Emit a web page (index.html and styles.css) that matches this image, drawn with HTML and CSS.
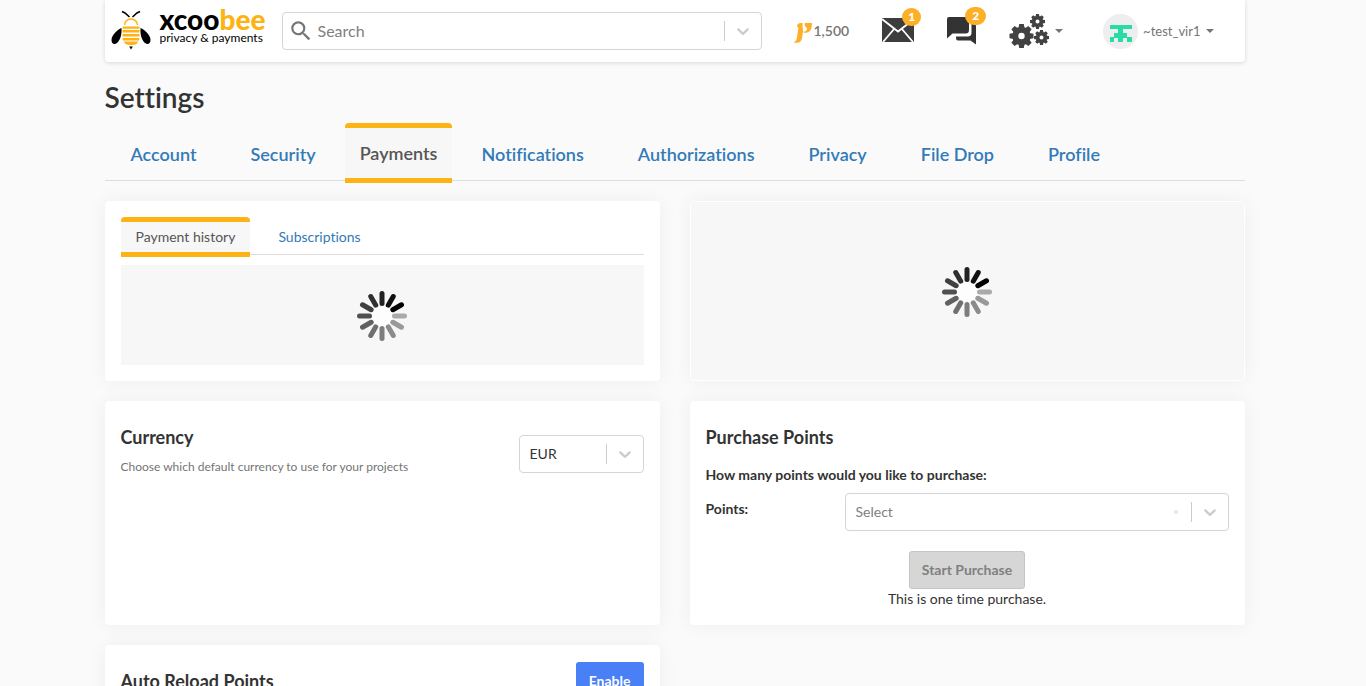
FILE: index.html
```html
<!DOCTYPE html>
<html lang="en">
<head>
<meta charset="utf-8">
<meta name="viewport" content="width=device-width, initial-scale=1">
<title>XcooBee - Settings</title>
<link rel="stylesheet" href="styles.css">
</head>
<body>
<svg class="defs" aria-hidden="true">
  <symbol id="chevron" viewBox="0 0 20 20">
    <path d="M4.516 7.548c0.436-0.446 1.043-0.481 1.576 0l3.908 3.747 3.908-3.747c0.533-0.481 1.141-0.446 1.574 0 0.436 0.445 0.408 1.197 0 1.615-0.406 0.418-4.695 4.502-4.695 4.502-0.217 0.223-0.502 0.335-0.787 0.335s-0.57-0.112-0.789-0.335c0 0-4.287-4.084-4.695-4.502s-0.436-1.17 0-1.615z"/>
  </symbol>
  <symbol id="spinner" viewBox="-25 -25 50 50">
    <circle r="12" fill="#fdfdfd"/>
    <g stroke-width="5" stroke-linecap="round">
      <path d="M12.500 0H22.500" stroke="#aaa"/>
      <path d="M12.500 0H22.500" stroke="#999" transform="rotate(30)"/>
      <path d="M12.500 0H22.500" stroke="#8b8b8b" transform="rotate(60)"/>
      <path d="M12.500 0H22.500" stroke="#7d7d7d" transform="rotate(90)"/>
      <path d="M12.500 0H22.500" stroke="#6f6f6f" transform="rotate(120)"/>
      <path d="M12.500 0H22.500" stroke="#606060" transform="rotate(150)"/>
      <path d="M12.500 0H22.500" stroke="#505050" transform="rotate(180)"/>
      <path d="M12.500 0H22.500" stroke="#404040" transform="rotate(210)"/>
      <path d="M12.500 0H22.500" stroke="#303030" transform="rotate(240)"/>
      <path d="M12.500 0H22.500" stroke="#222" transform="rotate(270)"/>
      <path d="M12.500 0H22.500" stroke="#111" transform="rotate(300)"/>
      <path d="M12.500 0H22.500" stroke="#000" transform="rotate(330)"/>
    </g>
  </symbol>
  <symbol id="gear" viewBox="-12 -12 24 24">
    <circle r="6.200" fill="none" stroke="#424242" stroke-width="6"/>
    <g fill="#424242">
      <path id="tooth" d="M-3 -8L-2.300 -12H2.300L3 -8z"/>
      <use href="#tooth" transform="rotate(45)"/>
      <use href="#tooth" transform="rotate(90)"/>
      <use href="#tooth" transform="rotate(135)"/>
      <use href="#tooth" transform="rotate(180)"/>
      <use href="#tooth" transform="rotate(225)"/>
      <use href="#tooth" transform="rotate(270)"/>
      <use href="#tooth" transform="rotate(315)"/>
    </g>
  </symbol>
</svg>

<header class="topbar">
  <a class="logo" href="#">
    <svg class="logo-bee" viewBox="0 0 40 40" aria-hidden="true">
      <path d="M11 1.500l3 1.500 4.500 4M29 1.500l-3 1.500-4.500 4" fill="none" stroke="#000" stroke-width="1.600"/>
      <path d="M13.500 15a6.500 6 0 0 1 13 0" fill="none" stroke="#fdb314" stroke-width="1.600"/>
      <path d="M10.500 18C6.500 19.500 .5 25 .5 30c0 4 3 5 5.500 3 3-2.500 5-8 4.500-15zM29.500 18c4 1.500 10 7 10 12 0 4-3 5-5.500 3-3-2.500-5-8-4.500-15z"/>
      <path d="M11.500 16.500h17v2.300h-17zM11.500 20h17v2.600h-17zM11.500 24h17v2.600h-17zM11.500 28h17l-.4 2.400H11.900zM12.700 31.600h14.600l-1.800 2.300c-3 1.400-8 1.400-11 0z" fill="#fdb314"/>
      <path d="M18.200 36.500h3.600L20 39.500z"/>
    </svg>
    <span class="logo-text">
      <span class="logo-name">xcoo<span class="logo-accent">bee</span></span>
      <span class="logo-tag">privacy &amp; payments</span>
    </span>
  </a>

  <div class="search control">
    <svg class="search-icon" viewBox="0 0 24 24" aria-hidden="true"><path fill="#757575" d="M15.500 14h-.79l-.28-.27A6.471 6.471 0 0 0 16 9.500 6.500 6.500 0 1 0 9.500 16c1.610 0 3.090-.59 4.230-1.570l.27.28v.79l5 4.990L20.490 19l-4.990-5zm-6 0C7.010 14 5 11.990 5 9.500S7.010 5 9.500 5 14 7.010 14 9.500 11.990 14 9.500 14z"/></svg>
    <input class="search-input" type="search" placeholder="Search" aria-label="Search">
    <span class="indicator"><svg class="chevron"><use href="#chevron"/></svg></span>
  </div>

  <a class="points" href="#">
    <svg class="points-icon" viewBox="0 0 60 66" aria-hidden="true">
      <path fill="#fdb027" d="M29 3H24C16 3 12 8 12 14C15 14 16 16 16 19L12 46C11 54 8 58 2 62H12C21 62 26 56 27 47L30 28C31 20 27 16 29 3Z"/>
      <path fill="#fdb027" d="M36 3H57L56 14C55 25 47 32 38 32C34 32 31 31 30 29C38 29 42 26 42 20C42 15 35 14 35 8C35 5 35 4 36 3Z"/>
    </svg>
    <span>1,500</span>
  </a>

  <a class="notice notice-mail" href="#" aria-label="Messages">
    <svg class="mail-icon" viewBox="0 0 32 24" aria-hidden="true">
      <path fill="#3d3d3d" d="M0 0h32v24H0z"/>
      <path fill="none" stroke="#fff" stroke-width="1.800" d="M0 1l16 12.500L32 1M1 24l11.500-13.500M31 24L19.500 10.500"/>
    </svg>
    <span class="badge">1</span>
  </a>
  <a class="notice notice-chat" href="#" aria-label="Conversations">
    <svg class="chat-icon" viewBox="0 0 30 28" aria-hidden="true">
      <path fill="#333" d="M2 0h18a2 2 0 0 1 2 2v11c0 2.500-1 3.500-3.500 3.500H5.500L0 21.500V2a2 2 0 0 1 2-2z"/>
      <path fill="#333" d="M24.500 7H27a2 2 0 0 1 2 2v18.500L23.500 23.500H11c-1.500 0-2-1-2-4h11c3.500 0 4.500-1 4.500-4.500z"/>
    </svg>
    <span class="badge">2</span>
  </a>

  <button class="menu menu-tools" type="button" aria-label="Tools">
    <svg class="gears-icon" viewBox="0 0 42 34" aria-hidden="true">
      <use href="#gear" x="0" y="10" width="25" height="24"/>
      <use href="#gear" x="21" y="0" width="15" height="15"/>
      <use href="#gear" x="25" y="16" width="15" height="15"/>
    </svg>
    <span class="caret"></span>
  </button>

  <button class="menu menu-user" type="button">
    <svg class="avatar" viewBox="0 0 35 35" aria-hidden="true">
      <circle cx="17.500" cy="17.500" r="17.500" fill="#eee"/>
      <path fill="#27dda5" d="M7 11h22v4h-9v4h4v4h5v5h-5v-4h-4v4h-5v-4h-4v4H7v-5h4v-4h4v-4H7z"/>
    </svg>
    <span>~test_vir1</span>
    <span class="caret"></span>
  </button>
</header>

<main class="page">
  <h1 class="page-title">Settings</h1>
  <nav class="tabs" aria-label="Settings">
    <a class="tab" href="#">Account</a>
    <a class="tab" href="#">Security</a>
    <a class="tab tab-active" href="#" aria-current="page">Payments</a>
    <a class="tab" href="#">Notifications</a>
    <a class="tab" href="#">Authorizations</a>
    <a class="tab" href="#">Privacy</a>
    <a class="tab" href="#">File Drop</a>
    <a class="tab" href="#">Profile</a>
  </nav>

  <div class="cards">
    <section class="card">
      <nav class="subtabs" aria-label="Payments">
        <a class="subtab subtab-active" href="#" aria-current="page">Payment history</a>
        <a class="subtab" href="#">Subscriptions</a>
      </nav>
      <div class="loading"><svg class="spinner" role="img" aria-label="Loading"><use href="#spinner"/></svg></div>
    </section>

    <section class="card card-loading">
      <svg class="spinner" role="img" aria-label="Loading"><use href="#spinner"/></svg>
    </section>

    <section class="card card-currency">
      <div class="currency-text">
        <h2 class="card-title">Currency</h2>
        <p class="hint">Choose which default currency to use for your projects</p>
      </div>
      <div class="control currency-control">
        <select class="select" aria-label="Currency"><option>EUR</option></select>
        <span class="indicator"><svg class="chevron"><use href="#chevron"/></svg></span>
      </div>
    </section>

    <section class="card card-purchase">
      <h2 class="card-title">Purchase Points</h2>
      <p class="question">How many points would you like to purchase:</p>
      <div class="field">
        <label class="field-label" for="points">Points:</label>
        <div class="control">
          <select class="select select-empty" id="points"><option>Select</option></select>
          <span class="indicator"><span class="dot"></span><svg class="chevron"><use href="#chevron"/></svg></span>
        </div>
      </div>
      <div class="purchase-action">
        <button class="button button-disabled" type="button" disabled>Start Purchase</button>
        <p class="note">This is one time purchase.</p>
      </div>
    </section>

    <section class="card card-reload">
      <h2 class="card-title">Auto Reload Points</h2>
      <button class="button button-primary" type="button">Enable</button>
    </section>
  </div>
</main>
</body>
</html>
```

FILE: styles.css
```css
* { box-sizing: border-box; }

html { scrollbar-width: none; }

body {
  margin: 0;
  padding-right: 17px;
  background: #fafafa;
  color: #333;
  font: 14px/20px Lato, "Open Sans", sans-serif;
  font-variant-ligatures: none;
}

h1, h2, p { margin: 0; }
a { color: #337ab7; text-decoration: none; }
button, input, select { font: inherit; color: inherit; }
.defs { display: block; width: 0; height: 0; }

/* Top bar */
.topbar {
  display: flex;
  align-items: center;
  max-width: 1140px;
  height: 62px;
  margin: 0 auto;
  padding: 0 31px 0 6px;
  background: #fff;
  border-radius: 0 0 4px 4px;
  box-shadow: 0 1px 4px rgba(0, 0, 0, .14);
}

.logo { display: flex; align-items: center; gap: 9px; width: 171px; padding-bottom: 2px; color: #000; }
.logo-bee { width: 40px; height: 40px; }
.logo-text { display: grid; padding-bottom: 8px; }
.logo-name { font-size: 28px; line-height: 24px; font-weight: 900; }
.logo-accent { color: #fdb314; }
.logo-tag { font-size: 12px; line-height: 14px; white-space: nowrap; }

.control {
  display: grid;
  align-items: center;
  height: 38px;
  background: #fff;
  border: 1px solid #d5d5d5;
  border-radius: 4px;
}
.search { flex: 0 1 480px; grid-template-columns: 35px 1fr auto; min-width: 0; }
.search-icon { width: 26px; height: 26px; margin-left: 5px; }
.search-input {
  width: 100%;
  min-width: 0;
  padding: 0;
  border: 0;
  outline: 0;
  background: none;
  font-size: 16px;
}
.search-input::placeholder { color: #808080; opacity: 1; }

.indicator {
  display: flex;
  align-items: center;
  justify-content: flex-end;
  pointer-events: none;
}
.chevron {
  width: 37px;
  height: 20px;
  padding: 0 8px;
  border-left: 1px solid #ccc;
  fill: #ccc;
}

.points {
  display: flex;
  align-items: center;
  gap: 1px;
  margin-left: 31px;
  color: #757575;
  font-weight: 600;
}
.points-icon { width: 20px; height: 22px; margin-top: 4px; }

.notice { position: relative; display: block; }
.notice svg { display: block; }
.notice-mail { margin-left: auto; margin-bottom: 2px; }
.notice-chat { margin-left: 33px; }
.mail-icon { width: 32px; height: 24px; }
.chat-icon { width: 30px; height: 28px; }
.badge {
  position: absolute;
  top: -10px;
  right: -7px;
  min-width: 19px;
  padding: 0 6px;
  border-radius: 9px;
  background: #fdb027;
  color: #fff;
  font-size: 12px;
  line-height: 18px;
  font-weight: 900;
  text-align: center;
}
.notice-chat .badge { right: -9px; padding: 0 7px; }

.menu {
  display: flex;
  align-items: center;
  padding: 0;
  border: 0;
  background: none;
  color: #757575;
}
.menu-tools { margin-left: 32px; gap: 4px; }
.gears-icon { width: 42px; height: 34px; }
.menu-user { margin-left: 40px; gap: 5px; font-size: 13px; }
.avatar { width: 35px; height: 35px; }
.caret {
  border: 4px solid transparent;
  border-top-color: #757575;
  border-bottom: 0;
}

/* Page */
.page { max-width: 1140px; margin: 0 auto; }
.page-title { padding-top: 20px; font-size: 28px; line-height: 30px; font-weight: 600; }

.tabs {
  display: flex;
  gap: 24px;
  margin-top: 11px;
  padding-left: 11px;
  height: 58px;
  border-bottom: 1px solid #ddd;
  font-size: 18px;
  font-weight: 600;
}
.tab { height: 60px; padding: 21px 15px 0; white-space: nowrap; }
.tab-active, .subtab-active {
  border: 0 solid #fdb314;
  border-width: 5px 0;
  border-radius: 4px 4px 0 0;
  background: #f7f7f7;
  color: #555;
}
.tab-active { margin: 0 -10px; padding-top: 15px; }

.cards {
  display: grid;
  grid-template-columns: repeat(2, minmax(0, 1fr));
  gap: 20px 30px;
  padding: 20px 0;
}
.card {
  padding: 16px;
  background: #fff;
  border-radius: 4px;
  box-shadow: 0 0 20px rgba(0, 0, 0, .05);
}
.card-title { font-size: 18px; line-height: 20px; font-weight: 700; }

.subtabs { display: flex; gap: 13px; height: 38px; border-bottom: 1px solid #ddd; }
.subtab { height: 40px; padding: 10px 15px 0; }
.subtab-active { padding-top: 5px; color: #555; }
.loading {
  display: grid;
  place-items: center;
  height: 100px;
  margin-top: 10px;
  padding-top: 2px;
  background: #f7f7f7;
}
.spinner { display: block; width: 50px; height: 50px; }
.card-loading { display: grid; place-items: center; padding-top: 18px; border: 1px solid #fff; background: #f7f7f7; }

.card-currency {
  display: flex;
  justify-content: space-between;
  align-items: flex-start;
}
.currency-text { padding-top: 10px; }
.hint { margin-top: 10px; color: #757575; font-size: 12px; }
.currency-control { width: 125px; margin-top: 18px; }
.select {
  grid-area: 1 / 1;
  width: 100%;
  height: 36px;
  padding: 0 10px;
  border: 0;
  background: none;
  appearance: none;
}
.control > .select + .indicator { grid-area: 1 / 1; }
.select-empty { color: #808080; }
.dot { width: 4px; height: 4px; margin-right: 13px; border-radius: 50%; background: #e6e6e6; }

.card-purchase { padding-top: 26px; }
.question { margin-top: 18px; font-weight: 700; }
.field {
  display: grid;
  grid-template-columns: 139px 1fr;
  margin-top: 8px;
}
.field-label { padding-top: 6px; font-weight: 700; }
.purchase-action { display: grid; justify-items: center; margin-top: 20px; }
.button {
  height: 38px;
  padding: 0 12px;
  border: 1px solid transparent;
  border-radius: 3px;
  font-weight: 700;
}
.button-disabled { border-color: #c4c4c4; background: #d6d6d6; color: #808080; }
.button-primary { background: #4a80f5; color: #fff; }

.card-reload { display: flex; justify-content: space-between; align-items: center; padding-top: 17px; }
```
